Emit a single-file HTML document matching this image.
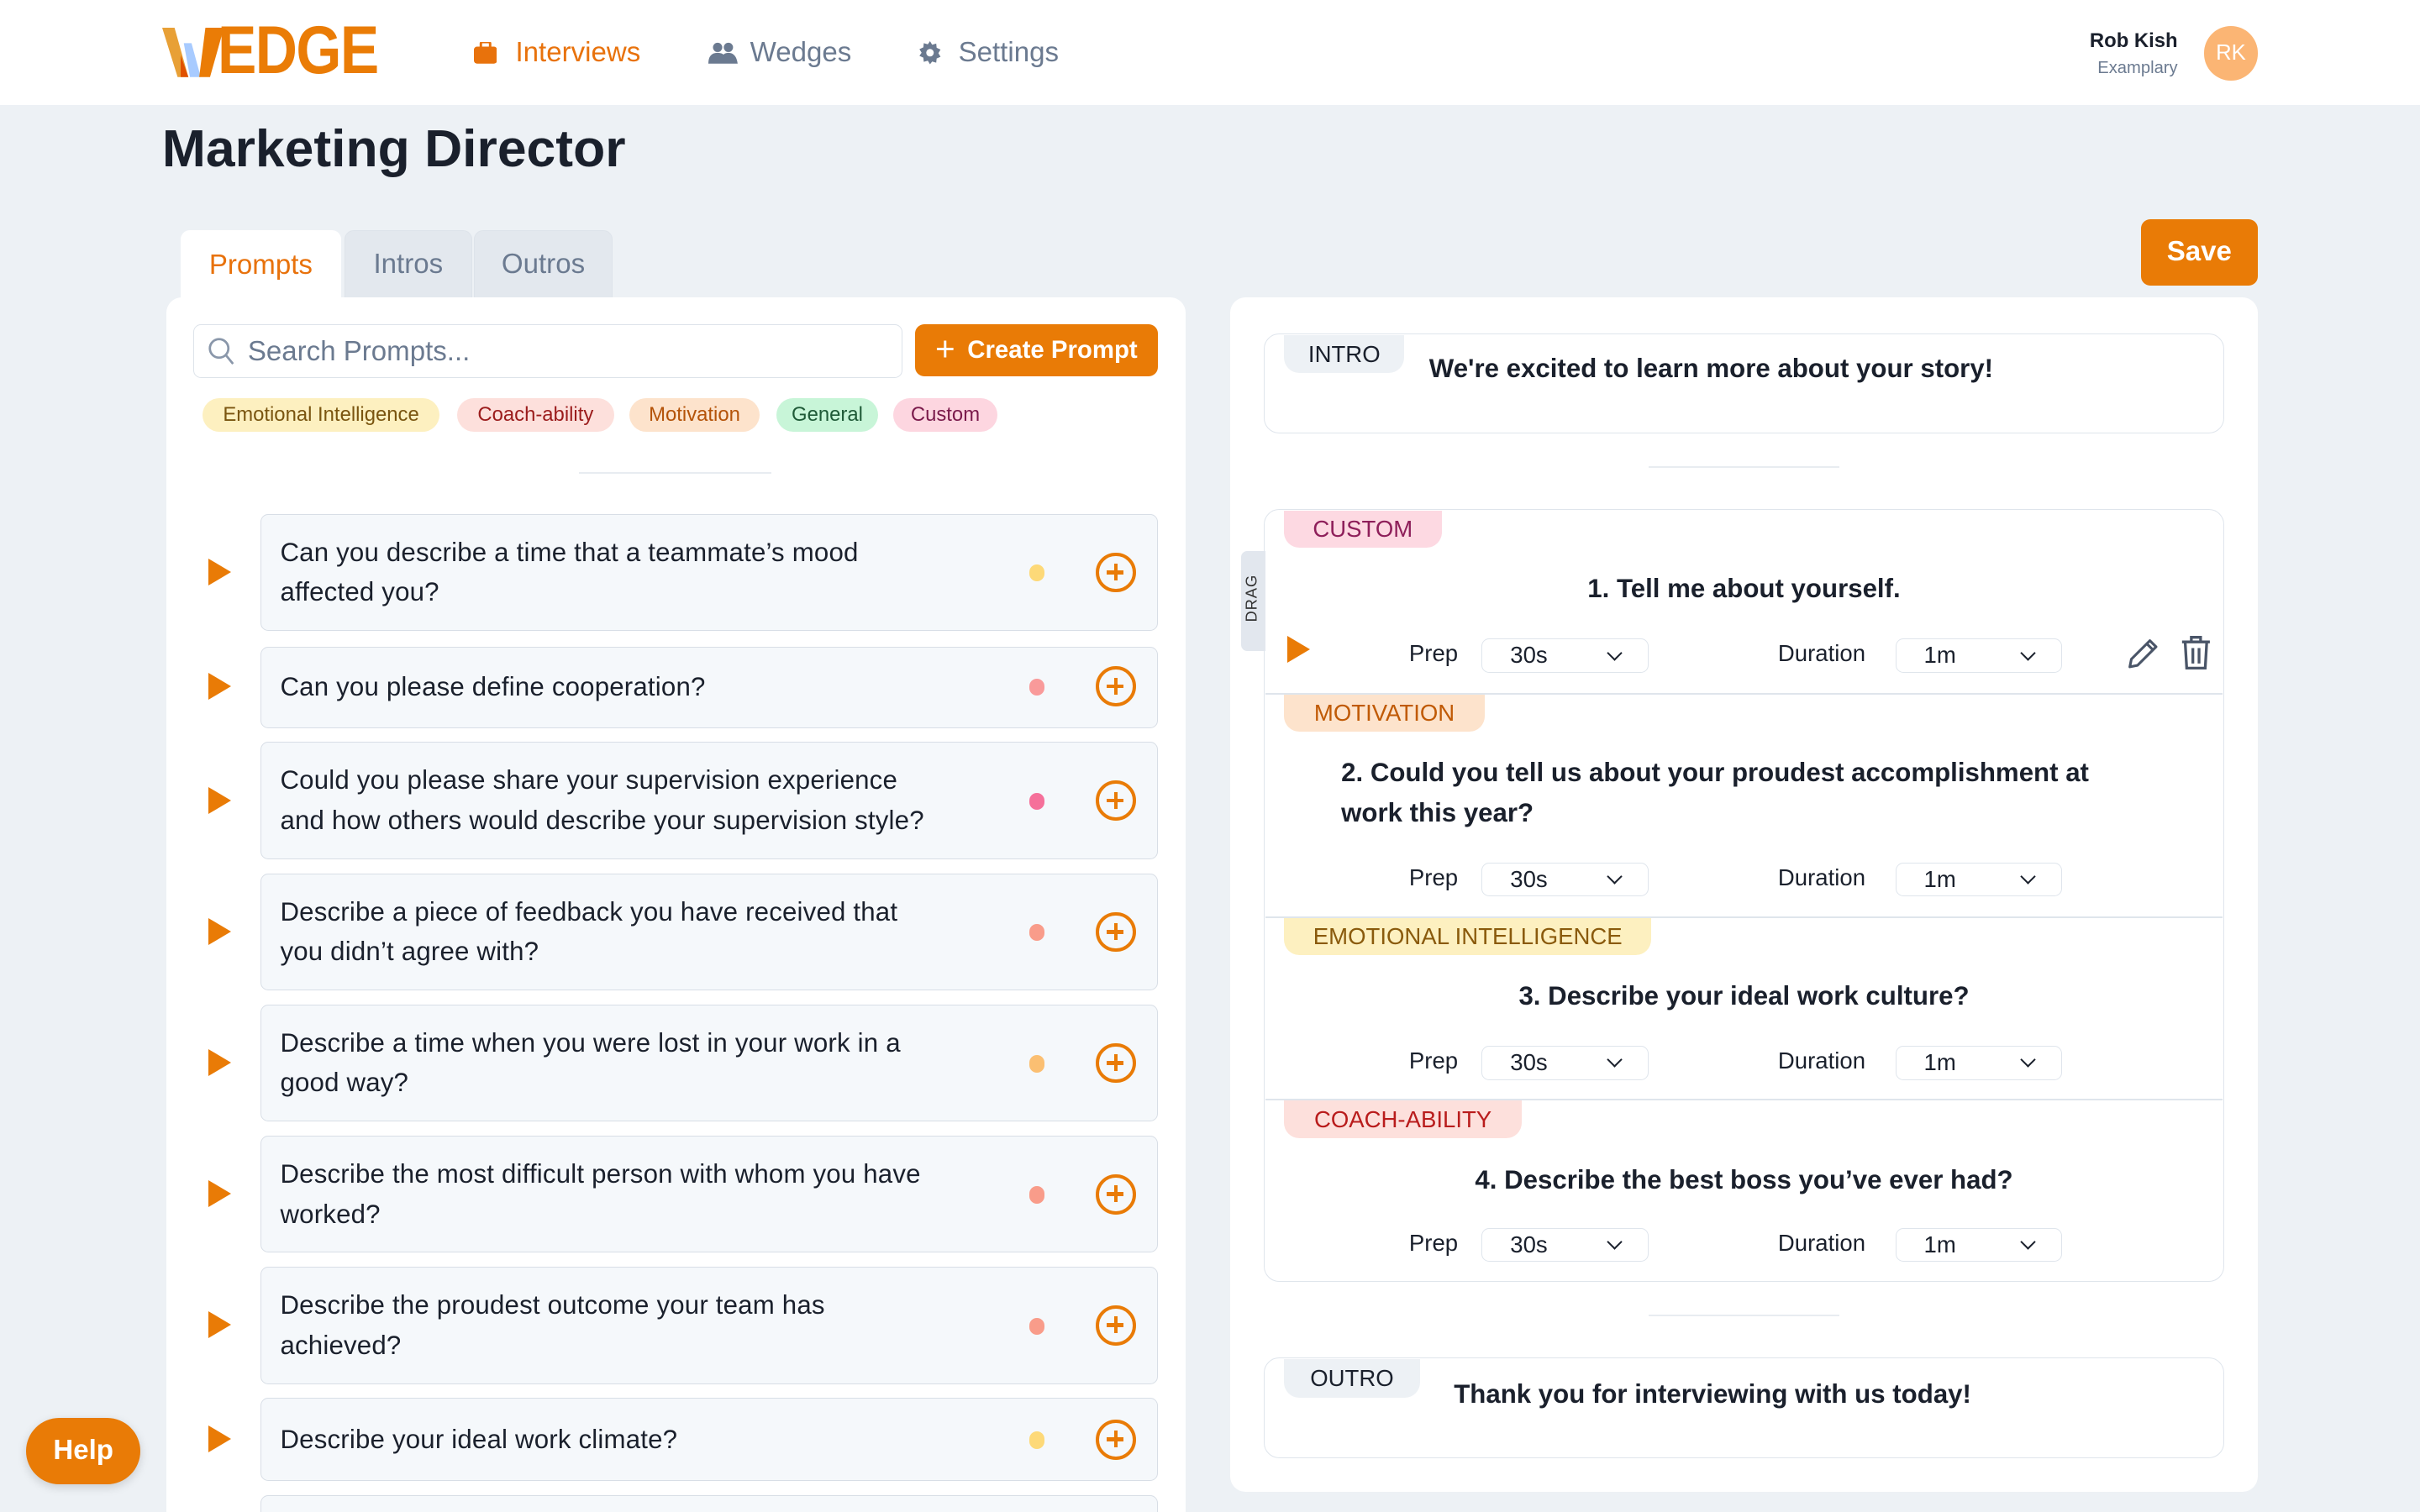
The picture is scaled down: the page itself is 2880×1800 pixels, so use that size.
<!DOCTYPE html>
<html><head><meta charset="utf-8"><style>
*{box-sizing:border-box;margin:0;padding:0}
html,body{width:2880px;height:1800px;overflow:hidden;background:#edf1f5}
#r{position:absolute;left:0;top:0;width:1568px;height:980px;zoom:1.83673;font-family:"Liberation Sans",sans-serif;color:#1a202c;background:#edf1f5;overflow:hidden}
.a{position:absolute}
.hdr{left:0;top:0;width:1568px;height:68px;background:#fff}
.nav{font-size:18px;top:24px;display:flex;align-items:center;gap:8px;color:#6b7a90}
.tab{top:149px;height:45px;border-radius:6px 6px 0 0;background:#e3e8ee;border:1px solid #dde3ea;font-size:18px;color:#6b7a90;display:flex;align-items:center;justify-content:center}
.panel{background:#fff;border-radius:10px}
.tag{top:258px;height:22px;border-radius:11px;font-size:13px;display:flex;align-items:center;padding:0 9px}
.item{left:169px;width:581px;background:#f5f8fb;border:1px solid #d8dee6;border-radius:5px;font-size:17px;line-height:26px;padding:0 12px;display:flex;align-items:center}
.item span{white-space:nowrap;letter-spacing:.1px}
.play{left:135px;width:0;height:0;border-left:15px solid #e97b06;border-top:9px solid transparent;border-bottom:9px solid transparent}
.dot{width:10px;height:11px;border-radius:5px}
.plus{width:26px;height:26px;border:2.5px solid #e97b06;border-radius:50%;color:#e97b06}
.plus:before{content:"";position:absolute;left:5px;top:9.5px;width:11px;height:2.5px;background:#e97b06}
.plus:after{content:"";position:absolute;left:9.5px;top:5px;width:2.5px;height:11px;background:#e97b06}
.box{border:1px solid #dfe5ec;border-radius:10px;background:#fff}
.lbl{font-size:15px;display:flex;align-items:center;justify-content:center;border-radius:0 0 10px 10px}
.q{font-size:17px;font-weight:bold}
.ctl{font-size:15px}
.sel{width:108px;height:22px;border:1px solid #dfe5ec;border-radius:5px;font-size:15px;padding-left:18px;line-height:21px}
.sel:after{content:"";position:absolute;right:18px;top:5px;width:6px;height:6px;border-right:1.6px solid #1a202c;border-bottom:1.6px solid #1a202c;transform:rotate(45deg)}
.sep{left:820px;width:620px;height:1px;background:#dfe5ec}
</style></head><body><div id="r">
<div class="a hdr"></div>
<svg class="a" style="left:105px;top:18px" width="40" height="32" viewBox="0 0 40 32"><polygon points="0,0 8,0 17,32 10,32" fill="#e8a036"/><polygon points="12,18 17,32 12,32" fill="#e05000"/><polygon points="14,10 19,10 25,32 18,32" fill="#a8cbff"/><polygon points="28,0 40,0 31,32 24,32" fill="#ea7c06"/></svg>
<div class="a" style="left:141px;top:10px;font-size:44px;font-weight:bold;color:#ea7c06;line-height:46px;transform:scaleX(.86);transform-origin:0 0;letter-spacing:-1px">EDGE</div>
<div class="a nav" style="left:307px;color:#e8720c"><svg width="15" height="14" viewBox="0 0 15 14"><rect x="0" y="3" width="15" height="11" rx="2" fill="#e8720c"/><rect x="4.5" y="0" width="6" height="4" rx="1" fill="none" stroke="#e8720c" stroke-width="1.6"/></svg><span style="margin-left:4px">Interviews</span></div>
<div class="a nav" style="left:459px"><svg width="19" height="14" viewBox="0 0 19 14"><circle cx="6" cy="3.5" r="3" fill="#6b7a90"/><circle cx="13" cy="3.5" r="3" fill="#6b7a90"/><path d="M0 14q0-7 6-7t6 7zM8 14q0-7 5-7t6 7z" fill="#6b7a90"/></svg><span>Wedges</span></div>
<div class="a nav" style="left:595px"><svg width="15" height="15" viewBox="0 0 16 16"><path d="M8 0l1.5 2.5 2.8-.8.3 2.9 2.7 1.2-1.5 2.5 1.5 2.5-2.7 1.2-.3 2.9-2.8-.8L8 16l-1.5-2.5-2.8.8-.3-2.9-2.7-1.2L2.2 8 .7 5.5 3.4 4.3l.3-2.9 2.8.8z" fill="#6b7a90"/><circle cx="8" cy="8" r="2.6" fill="#fff"/></svg><span style="margin-left:3px">Settings</span></div>
<div class="a" style="left:1340px;top:19px;width:71px;text-align:right;font-size:13px;font-weight:bold">Rob Kish</div>
<div class="a" style="left:1340px;top:38px;width:71px;text-align:right;font-size:11px;color:#6b7a90">Examplary</div>
<div class="a" style="left:1428px;top:17px;width:35px;height:35px;border-radius:50%;background:#fbb574;color:#fff;font-size:14px;display:flex;align-items:center;justify-content:center">RK</div>
<div class="a" style="left:105px;top:77px;font-size:34px;font-weight:bold;color:#1a202c">Marketing Director</div>
<div class="a" style="left:1387px;top:142px;width:76px;height:43px;background:#e97b06;border-radius:6px;color:#fff;font-size:18px;font-weight:bold;display:flex;align-items:center;justify-content:center">Save</div>
<div class="a tab" style="left:223px;width:83px">Intros</div>
<div class="a tab" style="left:307px;width:90px">Outros</div>
<div class="a panel" style="left:108px;top:193px;width:660px;height:800px"></div>
<div class="a tab" style="left:117px;width:104px;background:#fff;border-color:#fff;color:#e8720c;height:46px">Prompts</div>
<div class="a" style="left:125px;top:210px;width:460px;height:35px;border:1px solid #dde3ea;border-radius:5px;font-size:18px;color:#6b7a90;padding-left:35px;line-height:35px">Search Prompts...
<svg class="a" style="left:9px;top:8px" width="18" height="19" viewBox="0 0 18 19"><circle cx="7.5" cy="7.5" r="6" fill="none" stroke="#8a97aa" stroke-width="1.5"/><path d="M12 12l4.5 5.5" stroke="#8a97aa" stroke-width="1.5"/></svg></div>
<div class="a" style="left:593px;top:210px;width:157px;height:34px;background:#e97b06;border-radius:6px;color:#fff;font-size:16px;font-weight:bold;display:flex;align-items:center;justify-content:center"><span style="font-weight:normal;font-size:22px;margin-right:8px;margin-top:-2px">+</span>Create Prompt</div>
<div class="a tag" style="left:131px;background:#fdf0c0;color:#7a5510;width:154px;justify-content:center">Emotional Intelligence</div>
<div class="a tag" style="left:296px;background:#fde0dc;color:#9b1c1c;width:102px;justify-content:center">Coach-ability</div>
<div class="a tag" style="left:408px;background:#fde3cc;color:#b45309;width:84px;justify-content:center">Motivation</div>
<div class="a tag" style="left:503px;background:#c8f5d8;color:#1f5a37;width:66px;justify-content:center">General</div>
<div class="a tag" style="left:579px;background:#fdd6e0;color:#7a1a4b;width:67px;justify-content:center">Custom</div>
<div class="a" style="left:375px;top:306px;width:125px;height:1px;background:#e8ecf1"></div>

<div class="a item" style="top:333px;height:76px"><span>Can you describe a time that a teammate’s mood<br>affected you?</span></div>
<div class="a item" style="top:419px;height:53px"><span>Can you please define cooperation?</span></div>
<div class="a item" style="top:481px;height:76px"><span>Could you please share your supervision experience<br>and how others would describe your supervision style?</span></div>
<div class="a item" style="top:566px;height:76px"><span>Describe a piece of feedback you have received that<br>you didn’t agree with?</span></div>
<div class="a item" style="top:651px;height:76px"><span>Describe a time when you were lost in your work in a<br>good way?</span></div>
<div class="a item" style="top:736px;height:76px"><span>Describe the most difficult person with whom you have<br>worked?</span></div>
<div class="a item" style="top:821px;height:76px"><span>Describe the proudest outcome your team has<br>achieved?</span></div>
<div class="a item" style="top:906px;height:54px"><span>Describe your ideal work climate?</span></div>
<div class="a item" style="top:969px;height:40px"></div>

<div class="a play" style="top:362px"></div><div class="a dot" style="left:667px;top:366px;background:#fdd978"></div><div class="a plus" style="left:710px;top:358px"></div>
<div class="a play" style="top:436px"></div><div class="a dot" style="left:667px;top:440px;background:#f99a9a"></div><div class="a plus" style="left:710px;top:432px"></div>
<div class="a play" style="top:510px"></div><div class="a dot" style="left:667px;top:514px;background:#f5709a"></div><div class="a plus" style="left:710px;top:506px"></div>
<div class="a play" style="top:595px"></div><div class="a dot" style="left:667px;top:599px;background:#f99c8a"></div><div class="a plus" style="left:710px;top:591px"></div>
<div class="a play" style="top:680px"></div><div class="a dot" style="left:667px;top:684px;background:#fbbf72"></div><div class="a plus" style="left:710px;top:676px"></div>
<div class="a play" style="top:765px"></div><div class="a dot" style="left:667px;top:769px;background:#f99c8a"></div><div class="a plus" style="left:710px;top:761px"></div>
<div class="a play" style="top:850px"></div><div class="a dot" style="left:667px;top:854px;background:#f99c8a"></div><div class="a plus" style="left:710px;top:846px"></div>
<div class="a play" style="top:924px"></div><div class="a dot" style="left:667px;top:928px;background:#fdd978"></div><div class="a plus" style="left:710px;top:920px"></div>

<div class="a panel" style="left:797px;top:193px;width:666px;height:774px"></div>
<div class="a box" style="left:819px;top:216px;width:622px;height:65px"></div>
<div class="a lbl" style="left:832px;top:217px;width:78px;height:25px;background:#edf1f5;color:#1a202c">INTRO</div>
<div class="a q" style="left:926px;top:229px">We're excited to learn more about your story!</div>
<div class="a" style="left:1068px;top:302px;width:124px;height:1px;background:#e8ecf1"></div>
<div class="a box" style="left:819px;top:330px;width:622px;height:501px"></div>
<div class="a" style="left:804px;top:357px;width:16px;height:65px;background:#e2e7ee;border-radius:4px 0 0 4px"></div>
<div class="a" style="left:796px;top:382px;width:30px;text-align:center;font-size:10px;color:#333;transform:rotate(-90deg);letter-spacing:.5px">DRAG</div>
<div class="a sep" style="top:449px"></div><div class="a sep" style="top:594px"></div><div class="a sep" style="top:712px"></div>

<div class="a lbl" style="left:832px;top:331px;width:102px;height:24px;background:#fdd9e2;color:#8e1f5a">CUSTOM</div>
<div class="a q" style="left:820px;width:620px;text-align:center;top:372px">1. Tell me about yourself.</div>
<div class="a play" style="left:834px;top:412px"></div>
<div class="a ctl" style="left:913px;top:415px">Prep</div><div class="a sel" style="left:960px;top:414px">30s</div>
<div class="a ctl" style="left:1152px;top:415px">Duration</div><div class="a sel" style="left:1228px;top:414px">1m</div>
<svg class="a" style="left:1378px;top:413px" width="21" height="21" viewBox="0 0 21 21"><path d="M2 19l1-5L15 2l4 4L7 18z M13 4l4 4" fill="none" stroke="#4a5568" stroke-width="1.7" stroke-linejoin="round"/></svg>
<svg class="a" style="left:1413px;top:411px" width="20" height="23" viewBox="0 0 20 23"><path d="M1 5h18M7 5V2h6v3M3 5l1 17h12l1-17M8 9v10M12 9v10" fill="none" stroke="#4a5568" stroke-width="1.8"/></svg>

<div class="a lbl" style="left:832px;top:450px;width:130px;height:24px;background:#fde3cc;color:#c05a05">MOTIVATION</div>
<div class="a q" style="left:869px;top:488px;width:560px;line-height:26px;white-space:nowrap">2. Could you tell us about your proudest accomplishment at<br>work this year?</div>
<div class="a ctl" style="left:913px;top:560px">Prep</div><div class="a sel" style="left:960px;top:559px">30s</div>
<div class="a ctl" style="left:1152px;top:560px">Duration</div><div class="a sel" style="left:1228px;top:559px">1m</div>

<div class="a lbl" style="left:832px;top:595px;width:238px;height:24px;background:#fdf0c0;color:#8a5a0c">EMOTIONAL INTELLIGENCE</div>
<div class="a q" style="left:820px;width:620px;text-align:center;top:636px">3. Describe your ideal work culture?</div>
<div class="a ctl" style="left:913px;top:679px">Prep</div><div class="a sel" style="left:960px;top:678px">30s</div>
<div class="a ctl" style="left:1152px;top:679px">Duration</div><div class="a sel" style="left:1228px;top:678px">1m</div>

<div class="a lbl" style="left:832px;top:713px;width:154px;height:25px;background:#fde0dc;color:#b91c1c">COACH-ABILITY</div>
<div class="a q" style="left:820px;width:620px;text-align:center;top:755px">4. Describe the best boss you’ve ever had?</div>
<div class="a ctl" style="left:913px;top:797px">Prep</div><div class="a sel" style="left:960px;top:796px">30s</div>
<div class="a ctl" style="left:1152px;top:797px">Duration</div><div class="a sel" style="left:1228px;top:796px">1m</div>

<div class="a" style="left:1068px;top:852px;width:124px;height:1px;background:#e8ecf1"></div>
<div class="a box" style="left:819px;top:880px;width:622px;height:65px"></div>
<div class="a lbl" style="left:832px;top:881px;width:88px;height:25px;background:#edf1f5;color:#1a202c">OUTRO</div>
<div class="a q" style="left:942px;top:894px">Thank you for interviewing with us today!</div>

<div class="a" style="left:17px;top:919px;width:74px;height:43px;border-radius:22px;background:#e97b06;color:#fff;font-size:18px;font-weight:bold;display:flex;align-items:center;justify-content:center;box-shadow:0 2px 6px rgba(0,0,0,.15)">Help</div>
</div></body></html>
